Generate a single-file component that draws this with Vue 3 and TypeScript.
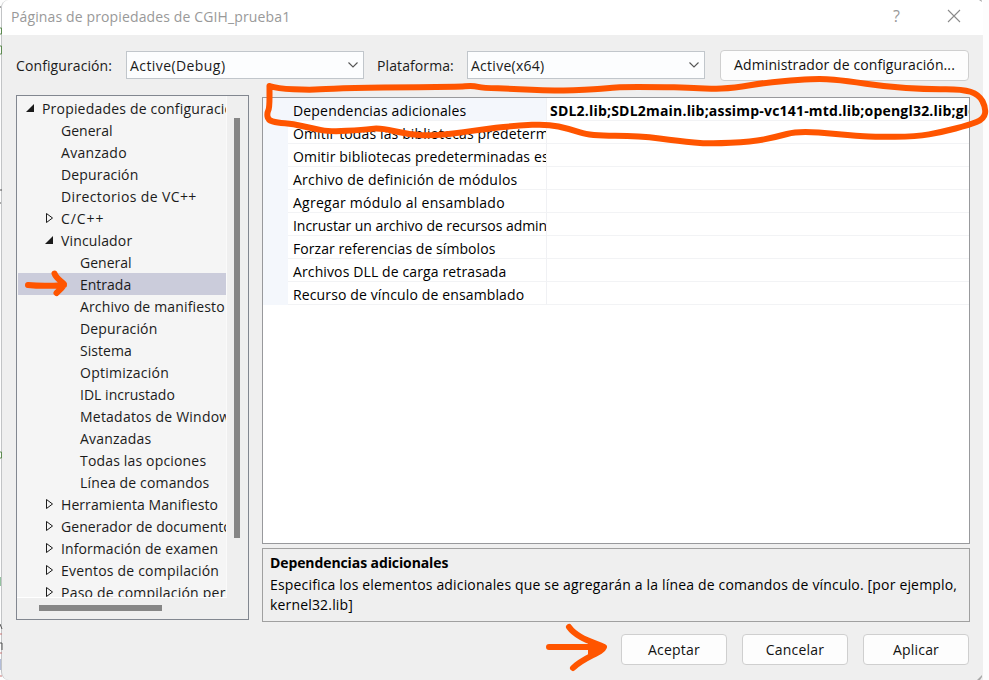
<script setup lang="ts">
type Arrow = 'open' | 'closed' | 'none'
type Point = [number, number]

interface TreeNode {
  label: string
  level: number
  arrow: Arrow
  selected?: boolean
  tracking?: number
}

interface Property {
  name: string
  value?: string
  tracking: number
}

const tree: TreeNode[] = [
  { label: 'Propiedades de configuración', level: 0, arrow: 'open', tracking: 0.19 },
  { label: 'General', level: 1, arrow: 'none', tracking: 0 },
  { label: 'Avanzado', level: 1, arrow: 'none', tracking: 0.3 },
  { label: 'Depuración', level: 1, arrow: 'none' },
  { label: 'Directorios de VC++', level: 1, arrow: 'none', tracking: 0.37 },
  { label: 'C/C++', level: 1, arrow: 'closed', tracking: 0.9 },
  { label: 'Vinculador', level: 1, arrow: 'open' },
  { label: 'General', level: 2, arrow: 'none', tracking: 0 },
  { label: 'Entrada', level: 2, arrow: 'none', selected: true, tracking: 0 },
  { label: 'Archivo de manifiesto', level: 2, arrow: 'none' },
  { label: 'Depuración', level: 2, arrow: 'none' },
  { label: 'Sistema', level: 2, arrow: 'none', tracking: 0.05 },
  { label: 'Optimización', level: 2, arrow: 'none', tracking: 0.25 },
  { label: 'IDL incrustado', level: 2, arrow: 'none', tracking: 0.02 },
  { label: 'Metadatos de Windows', level: 2, arrow: 'none', tracking: 0.22 },
  { label: 'Avanzadas', level: 2, arrow: 'none', tracking: 0.2 },
  { label: 'Todas las opciones', level: 2, arrow: 'none', tracking: 0.17 },
  { label: 'Línea de comandos', level: 2, arrow: 'none' },
  { label: 'Herramienta Manifiesto', level: 1, arrow: 'closed', tracking: 0.07 },
  { label: 'Generador de documentos', level: 1, arrow: 'closed', tracking: 0.06 },
  { label: 'Información de examen', level: 1, arrow: 'closed', tracking: 0.08 },
  { label: 'Eventos de compilación', level: 1, arrow: 'closed', tracking: 0.2 },
  { label: 'Paso de compilación personalizada', level: 1, arrow: 'closed', tracking: 0.22 },
]

const properties: Property[] = [
  {
    name: 'Dependencias adicionales',
    value: 'SDL2.lib;SDL2main.lib;assimp-vc141-mtd.lib;opengl32.lib;glew32.lib',
    tracking: 0.17,
  },
  { name: 'Omitir todas las bibliotecas predeterminadas', tracking: 0.13 },
  { name: 'Omitir bibliotecas predeterminadas específicas', tracking: 0.15 },
  { name: 'Archivo de definición de módulos', tracking: 0.22 },
  { name: 'Agregar módulo al ensamblado', tracking: 0.26 },
  { name: 'Incrustar un archivo de recursos administrados', tracking: -0.05 },
  { name: 'Forzar referencias de símbolos', tracking: 0.06 },
  { name: 'Archivos DLL de carga retrasada', tracking: 0.12 },
  { name: 'Recurso de vínculo de ensamblado', tracking: 0.13 },
]

const loop: Point[] = [
  [269.5, 86], [277, 88.5], [310, 90], [330, 88.7], [380, 87.3], [457, 87], [473, 85.7],
  [483, 88], [513, 88.7], [550, 91], [597, 89.3], [617, 87], [659, 87], [689, 87.7],
  [709, 89], [734, 88], [766, 82.5], [799, 80], [822, 78.7], [846, 80.7], [886, 86.7],
  [926, 89.3], [962, 89], [979, 94.5], [986, 108], [984, 119], [969, 125], [942, 132],
  [916, 136.8], [872, 136.7], [856, 135.7], [839, 134.2], [798, 131], [776, 137],
  [752, 141.7], [709, 144], [679, 141], [640, 136], [590, 135.7], [570, 129], [547, 124],
  [517, 125.7], [490, 128.3], [437, 136], [407, 134.3], [380, 127.7], [363, 130],
  [330, 131.7], [313, 128.5], [293, 124], [277, 122.7], [268, 120], [267, 113],
  [269.5, 108], [269.5, 86],
]

/** Joins the points with quadratic curves that meet halfway between neighbours. */
function smooth(points: Point[]): string {
  const parts = [`M${points[0].join(' ')}`]
  for (let i = 1; i < points.length - 1; i++) {
    const [x, y] = points[i]
    const [nx, ny] = points[i + 1]
    parts.push(`Q${x} ${y} ${(x + nx) / 2} ${(y + ny) / 2}`)
  }
  parts.push(`L${points[points.length - 1].join(' ')}`)
  return parts.join('')
}

const loopPath = smooth(loop)
</script>

<template>
  <div class="screen">
    <main class="dialog">
      <header class="titlebar">
        <span class="title">Páginas de propiedades de CGIH_prueba1</span>
        <span class="help">?</span>
        <svg class="close" width="14" height="14" viewBox="0 0 14 14">
          <path d="M1 1 13 13M13 1 1 13" />
        </svg>
      </header>

      <section class="toolbar">
        <label class="label-config">Configuración:</label>
        <div class="select">
          <span class="debug">Active(Debug)</span>
          <svg width="12" height="8" viewBox="0 0 12 8"><path d="M1.5 1.5 6 6 10.5 1.5" /></svg>
        </div>
        <label class="label-platform">Plataforma:</label>
        <div class="select">
          <span class="x64">Active(x64)</span>
          <svg width="12" height="8" viewBox="0 0 12 8"><path d="M1.5 1.5 6 6 10.5 1.5" /></svg>
        </div>
        <button class="button manager">Administrador de configuración...</button>
      </section>

      <section class="content">
        <nav class="tree">
          <ul class="nodes">
            <li
              v-for="(node, i) in tree"
              :key="i"
              :class="['node', 'level-' + node.level, { selected: node.selected }]"
            >
              <svg class="arrow" width="12" height="12" viewBox="0 0 12 12">
                <path v-if="node.arrow === 'open'" class="filled" d="M10 2V10H2Z" />
                <path v-else-if="node.arrow === 'closed'" class="hollow" d="M3.5 1.5 9.5 6 3.5 10.5Z" />
              </svg>
              <span :style="{ letterSpacing: (node.tracking ?? 0.15) + 'px' }">{{ node.label }}</span>
            </li>
          </ul>
          <div class="vbar"><i></i></div>
          <div class="hbar"><i></i></div>
        </nav>

        <div class="right">
          <div class="grid">
            <div v-for="(p, i) in properties" :key="p.name" :class="['row', { active: i === 0 }]">
              <span class="gutter"></span>
              <span class="name" :style="{ letterSpacing: p.tracking + 'px' }">{{ p.name }}</span>
              <span class="value">{{ p.value }}</span>
            </div>
          </div>
          <div class="description">
            <h2>Dependencias adicionales</h2>
            <p>Especifica los elementos adicionales que se agregarán a la línea de comandos de vínculo. [por ejemplo,<br />kernel32.lib]</p>
          </div>
        </div>
      </section>

      <footer class="actions">
        <button class="button">Aceptar</button>
        <button class="button">Cancelar</button>
        <button class="button">Aplicar</button>
      </footer>
    </main>

    <svg class="ink" width="989" height="680" viewBox="0 0 989 680">
      <g class="stroke">
        <path :d="loopPath" />
        <path d="M28 285 C42 286.500 52 286 64 285 M54.500 273.500 C56 278 61 281 64 284 C63 288 59 290 56.500 293" />
        <path d="M549 647 H602 M569 627 C576 637 590 641 604 647 C602 653 584 657 573 668" />
      </g>
      <path class="tip" d="M58 279 67 284 58 292ZM588 641 605 647 588 655Z" />
    </svg>
    <svg class="edge" width="3" height="680" viewBox="0 0 3 680">
      <path class="green" d="M0 28H1.5V34H0M0 46H1.5V54H0M0 452H1.5V458H0" />
      <path class="dark" d="M0 7H1M0 190H2M0 203H1M0 624 2 629M0 643H2V650" />
      <path class="leaf" d="M0 577V586" />
      <path class="red" d="M0 634H2M0 653H2M0 676H2" />
      <path class="blue" d="M0 659V670" />
    </svg>
    <svg class="corners" width="10" height="680" viewBox="0 0 10 680">
      <path d="M3 0H5.500L6 2ZM1 680 6 675V677L4 680Z" />
    </svg>
  </div>
</template>

<style>
body {
  margin: 0;
  background: #fff;
}
</style>

<style scoped>
.screen {
  position: relative;
  width: 989px;
  height: 680px;
  overflow: hidden;
  background: #fdfdfd;
  font-family: 'Open Sans', 'Noto Sans', sans-serif;
  font-size: 14px;
  letter-spacing: 0.1px;
  color: #1b1b1b;
}
.dialog {
  box-sizing: border-box;
  width: 982px;
  height: 680px;
  margin-left: 1px;
  display: flex;
  flex-direction: column;
  background: #efefef;
  border-left: 1px solid #c2c4c6;
  border-radius: 8px 0 0 8px;
  overflow: hidden;
}
.titlebar {
  box-sizing: border-box;
  height: 35px;
  display: flex;
  align-items: center;
  padding: 0 22px 3px 9px;
  background: #fff;
  color: #999;
}
.title {
  flex: 1;
  letter-spacing: 0.13px;
}
.help {
  width: 10px;
  margin-right: 44px;
  font-size: 16px;
}
.close path {
  fill: none;
  stroke: #8a8a8a;
  stroke-width: 1.1;
}
.toolbar {
  height: 60px;
  display: flex;
  align-items: center;
  padding-left: 14px;
}
.label-config {
  width: 110px;
}
.label-platform {
  width: 90px;
  margin-left: 13px;
}
.select {
  box-sizing: border-box;
  width: 238px;
  height: 28px;
  display: flex;
  align-items: center;
  justify-content: space-between;
  padding: 0 4px 0 3px;
  background: #fcfdfe;
  border: 1px solid #c1c6cb;
}
.debug {
  letter-spacing: 0.42px;
}
.x64 {
  letter-spacing: 0.27px;
}
.select path {
  fill: none;
  stroke: #555;
  stroke-width: 1.1;
}
.button {
  box-sizing: border-box;
  width: 106px;
  height: 31px;
  padding: 0 0 1px;
  background: #fdfdfd;
  border: 1px solid #cfcfcf;
  border-radius: 4px;
  font: inherit;
  letter-spacing: 0.2px;
  color: #111;
  white-space: nowrap;
}
.manager {
  width: 249px;
  margin-left: 15px;
  letter-spacing: 0.1px;
}
.content {
  display: flex;
  gap: 13px;
  padding-left: 14px;
}
.tree {
  box-sizing: border-box;
  width: 233px;
  height: 525px;
  display: grid;
  grid-template-columns: 210px 1fr;
  grid-template-rows: 502px 1fr;
  border: 1px solid #828790;
}
.nodes {
  margin: 0;
  padding: 1px 0 0 1px;
  list-style: none;
  overflow: hidden;
  background: #f5f5f5;
  border-right: 1px solid #fafafa;
  border-bottom: 1px solid #fff;
}
.node {
  height: 22px;
  display: flex;
  align-items: center;
  white-space: nowrap;
}
.node span {
  line-height: 20px;
  padding-top: 2px;
}
.level-0 {
  padding-left: 6px;
}
.level-1 {
  padding-left: 25px;
}
.level-2 {
  padding-left: 44px;
}
.arrow {
  flex: none;
  margin-right: 6px;
}
.filled {
  fill: #1b1b1b;
}
.hollow {
  fill: none;
  stroke: #1b1b1b;
}
.selected {
  background: #cbccdb;
}
.vbar {
  padding: 22px 0 0 7px;
}
.vbar i {
  display: block;
  width: 6px;
  height: 420px;
  background: #868686;
}
.hbar {
  padding: 7px 0 0 22px;
}
.hbar i {
  display: block;
  width: 123px;
  height: 6px;
  background: #868686;
}
.right {
  width: 708px;
  padding-top: 2px;
}
.grid {
  box-sizing: border-box;
  height: 447px;
  background: #fff;
  border: 1px solid #98999c;
}
.row {
  height: 23px;
  display: grid;
  grid-template-columns: 25px 259px 1fr;
  line-height: 25px;
  color: #000;
}
.row span {
  box-sizing: border-box;
  overflow: hidden;
  white-space: nowrap;
  border-bottom: 1px solid #f2f3f5;
}
.row .gutter {
  background: #f4f7fc;
  border: 0;
}
.row .name {
  padding-left: 5px;
  border-right: 1px solid #f0f1f4;
}
.row .value {
  padding-left: 3px;
  font-weight: 700;
  letter-spacing: 0.2px;
}
.active .name {
  background: #f4f7fc;
}
.description {
  box-sizing: border-box;
  height: 74px;
  margin-top: 4px;
  padding: 4px 7px;
  border: 1px solid #a0a0a0;
  color: #000;
  line-height: 20px;
}
.description h2 {
  margin: 0 0 2px;
  font-size: inherit;
  line-height: 20px;
  letter-spacing: -0.1px;
}
.description p {
  margin: 0;
  white-space: nowrap;
  letter-spacing: 0.17px;
}
.actions {
  display: flex;
  justify-content: flex-end;
  gap: 15px;
  padding: 12px 14px 0 0;
}
.ink,
.edge {
  position: absolute;
  top: 0;
  left: 0;
}
.corners {
  position: absolute;
  top: 0;
  left: 976px;
}
.corners path {
  fill: #aaa;
}
.stroke {
  fill: none;
  stroke: #ff5500;
  stroke-width: 6;
  stroke-linecap: round;
  stroke-linejoin: round;
}
.tip {
  fill: #ff5500;
}
.edge path {
  fill: none;
  stroke-width: 1;
}
.edge .green {
  stroke: #5c8a50;
}
.edge .dark {
  stroke: #555;
}
.edge .leaf {
  stroke: #2f8a45;
}
.edge .red {
  stroke: #c77;
}
.edge .blue {
  stroke: #6a7fb5;
}
</style>
